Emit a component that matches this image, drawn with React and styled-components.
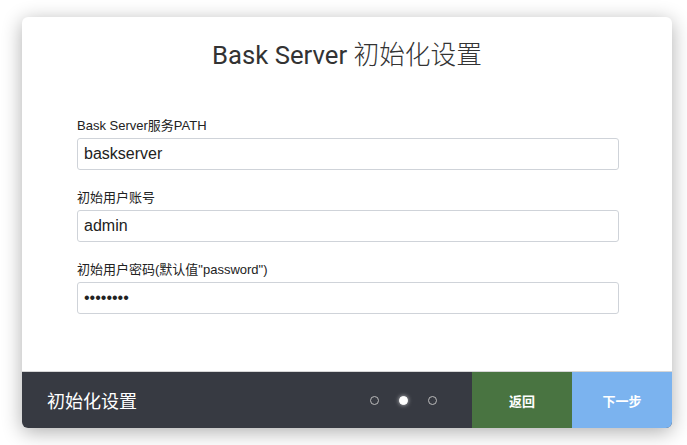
import React from "react";
import styled, { createGlobalStyle } from "styled-components";

const Global = createGlobalStyle`
  html, body { margin: 0; padding: 0; background: #fff; }
  body { font-family: "Liberation Sans", Arial, "Noto Sans CJK SC", sans-serif; }
  * { box-sizing: border-box; }
`;

const Page = styled.div`
  width: 687px;
  height: 445px;
  padding: 17px 15px 17px 22px;
  display: flex;
`;

const Card = styled.div`
  width: 650px;
  height: 411px;
  background: #fff;
  border-radius: 6px;
  box-shadow: 0 4px 20px rgba(0, 0, 0, 0.32);
  display: flex;
  flex-direction: column;
  overflow: hidden;
`;

const Body = styled.div`
  flex: 1;
  display: flex;
  flex-direction: column;
  align-items: center;
  padding-top: 20px;
`;

const Title = styled.h1`
  margin: 0;
  font-family: Roboto, "Noto Sans CJK SC", sans-serif;
  font-weight: 400;
  font-size: 25.7px;
  line-height: 32px;
  color: #333;
`;

const TitleCjk = styled.span`
  font-family: "Noto Sans CJK SC", sans-serif;
  font-weight: 300;
`;

const Form = styled.form`
  align-self: stretch;
  padding: 47px 53px 0 55px;
  display: flex;
  flex-direction: column;
  gap: 20px;
`;

const Group = styled.div`
  display: flex;
  flex-direction: column;
  gap: 4px;
`;

const Label = styled.label`
  font-size: 13px;
  line-height: 16px;
  color: #222;
`;

const Input = styled.input`
  height: 32px;
  width: 100%;
  border: 1px solid #cfd3d9;
  border-radius: 3px;
  padding: 0 6px;
  font-family: "Liberation Sans", Arial, sans-serif;
  font-size: 16px;
  color: #222;
  outline: none;
  background: #fff;
`;

const Footer = styled.div`
  height: 57px;
  display: flex;
  align-items: stretch;
  background: #373a42;
  border-top: 1px solid #d6d6d6;
`;

const FooterTitle = styled.div`
  flex: 1;
  display: flex;
  align-items: center;
  padding-left: 25px;
  color: #fff;
  font-family: "Noto Sans CJK SC", sans-serif;
  font-size: 18px;
`;

const Dots = styled.div`
  display: flex;
  align-items: center;
  gap: 20px;
  padding-right: 35px;
`;

const Dot = styled.span`
  width: 9px;
  height: 9px;
  border-radius: 50%;
  border: 1px solid ${(p) => (p.$active ? "#fff" : "#bbb")};
  background: ${(p) => (p.$active ? "#fff" : "transparent")};
  box-shadow: ${(p) => (p.$active ? "0 0 4px rgba(255,255,255,0.7)" : "none")};
`;

const Button = styled.button`
  width: 100px;
  border: none;
  background: ${(p) => p.$bg};
  color: #fff;
  font-family: "Noto Sans CJK SC", sans-serif;
  font-weight: 700;
  font-size: 13px;
  cursor: pointer;
  padding: 0;
`;

export default function App() {
  return (
    <>
      <Global />
      <Page>
        <Card>
          <Body>
            <Title>
              Bask Server <TitleCjk>初始化设置</TitleCjk>
            </Title>
            <Form onSubmit={(e) => e.preventDefault()}>
              <Group>
                <Label>Bask Server服务PATH</Label>
                <Input defaultValue="baskserver" />
              </Group>
              <Group>
                <Label>初始用户账号</Label>
                <Input defaultValue="admin" />
              </Group>
              <Group>
                <Label>初始用户密码(默认值"password")</Label>
                <Input type="password" defaultValue="password" />
              </Group>
            </Form>
          </Body>
          <Footer>
            <FooterTitle>初始化设置</FooterTitle>
            <Dots>
              <Dot />
              <Dot $active />
              <Dot />
            </Dots>
            <Button $bg="#497441">返回</Button>
            <Button $bg="#7bb3ef">下一步</Button>
          </Footer>
        </Card>
      </Page>
    </>
  );
}
